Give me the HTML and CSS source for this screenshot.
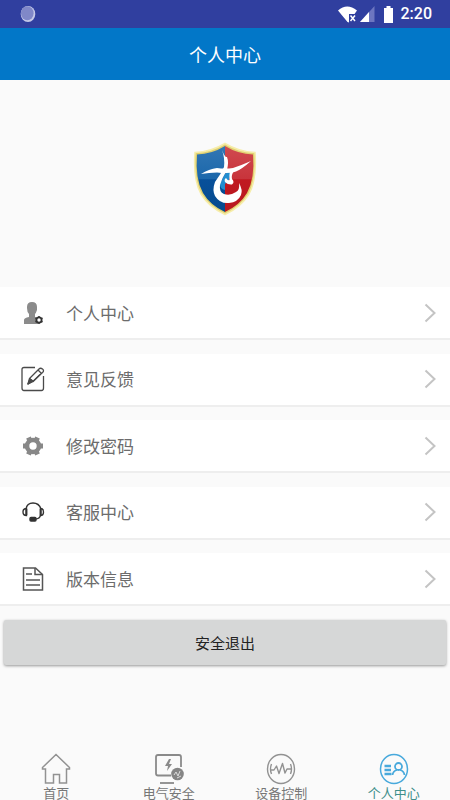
FILE: index.html
```html
<!DOCTYPE html>
<html lang="zh-CN">
<head>
<meta charset="utf-8">
<meta name="viewport" content="width=device-width, initial-scale=1">
<title>个人中心</title>
<link rel="stylesheet" href="styles.css">
</head>
<body>
<div class="status">
  <svg class="status-dot" width="16" height="18" viewBox="0 0 16 18" aria-hidden="true">
    <ellipse cx="8" cy="9" rx="7.300" ry="8" fill="#c4c9e8"/>
    <ellipse cx="7.300" cy="8.300" rx="6.300" ry="7" fill="#8088c8"/>
  </svg>
  <div class="status-right">
    <svg width="56" height="20" viewBox="0 0 56 20" aria-hidden="true">
      <path d="M0 6.500Q9-1.500 19 6.500L16.500 10H11v8.500L9.500 18Z" fill="#fff"/>
      <path d="M12.500 11.500l4.500 5.500M17 11.500l-4.500 5.500" stroke="#fff" stroke-width="1.500"/>
      <path d="M22 18L36.500 2v16Z" fill="#6d76c0"/>
      <path d="M22 18L31 8v10Z" fill="#fff"/>
      <path d="M46 4h2.500V2h4v2H55v15H46Z" fill="#fff"/>
    </svg>
    <span class="clock">2:20</span>
  </div>
</div>
<header class="header"><h1>个人中心</h1></header>
<main class="main">
  <div class="brand">
    <svg width="64" height="74" viewBox="0 0 64 74" role="img" aria-label="徽标">
      <defs>
        <linearGradient id="blue" x1="0" y1="0" x2="0" y2="1"><stop offset="0" stop-color="#3277b4"/><stop offset=".5" stop-color="#1b67ab"/><stop offset=".51" stop-color="#08509a"/><stop offset="1" stop-color="#064a8e"/></linearGradient>
        <linearGradient id="red" x1="0" y1="0" x2="0" y2="1"><stop offset="0" stop-color="#d04a50"/><stop offset=".5" stop-color="#c8343b"/><stop offset=".51" stop-color="#c01920"/><stop offset="1" stop-color="#b81820"/></linearGradient>
      </defs>
      <path d="M32 1.500Q46 10 62 10.500Q64 37 56 52Q48 65 32 72.500Q16 65 8 52Q0 37 2 10.500Q18 10 32 1.500Z" fill="#e0d070" stroke="#f6edaa" stroke-width="1.500"/>
      <path d="M32 4Q19 12 4 12.500Q2 37 10 51Q17 63 32 70Z" fill="url(#blue)"/>
      <path d="M32 4Q45 12 60 12.500Q62 37 54 51Q47 63 32 70Z" fill="url(#red)"/>
      <path d="M33 30H38L36 38L32 42V48Q27 47 27 42Z" fill="#248ed0"/>
      <path d="M8 32Q16 27 24 26Q32 27 40 26Q49 23 58 19Q49 27 43 29.500Q37 32 24 30.500Q16 30.500 8 32Z" fill="#fff"/>
      <path d="M29 8Q32 16 34 15Q36 20 34 28Q29 36 27 43Q26 50 31 52Q37 54 43 50Q47 48 46 41Q50 48 48 53Q45 60 36 61Q27 62 22 54Q19 48 22 40Q28 32 31 25Q32 16 29 8Z" fill="#fff"/>
      <path d="M37 29H41Q38 33 39 37Q42 40 39 42.500Q35 43 32 40Q31 37 33 36Q35 39 36.500 38Q36 33 37 29Z" fill="#fff"/>
    </svg>
  </div>
  <ul class="menu">
    <li><a class="row" href="#profile">
      <svg class="icon" width="24" height="26" viewBox="0 0 24 26" aria-hidden="true">
        <path d="M6 7Q6 2 11 2T16 7V10Q15 13 14 14V17L19 18L17 24H3V20Q3 18 8 17V14Q6 12 6 8Z" fill="#8b8b8b"/>
        <circle cx="18" cy="20" r="2.600" fill="#fff" stroke="#333" stroke-width="1.800"/>
        <path d="M18 16v1M18 23v1M14.500 18l1 .6M20.500 21.400l1 .6M14.500 22l1-.6M20.500 18.600l1-.6" stroke="#333" stroke-width="1.500"/>
      </svg>
      <span class="label">个人中心</span>
      <svg class="chevron" width="12" height="20" viewBox="0 0 12 20" aria-hidden="true"><path d="M1.500 1.500L10.500 10L1.500 18.500"/></svg>
    </a></li>
    <li><a class="row" href="#feedback">
      <svg class="icon" width="24" height="26" viewBox="0 0 24 26" aria-hidden="true" fill="none" stroke="#4a4a4a" stroke-width="1.300" stroke-linejoin="round">
        <path d="M14 1.500H3Q1 1.500 1 3.500V22Q1 24.500 3 24.500H20.500Q22.500 24.500 22.500 22V10"/>
        <path d="M7 18L8.500 12.500L18 3Q19.500 1.500 21.500 3T21.500 6.500L12 15.500Z"/>
        <path d="M17 4L20.500 7.500M8.500 12.500L12 15.500L19 8.500M7 18L9.500 13.500"/>
        <path d="M7 18L9 13L12 15Z" fill="#4a4a4a"/>
      </svg>
      <span class="label">意见反馈</span>
      <svg class="chevron" width="12" height="20" viewBox="0 0 12 20" aria-hidden="true"><path d="M1.500 1.500L10.500 10L1.500 18.500"/></svg>
    </a></li>
    <li><a class="row" href="#password">
      <svg class="icon" width="24" height="26" viewBox="0 0 24 26" aria-hidden="true">
        <circle cx="12" cy="13" r="6" fill="none" stroke="#888" stroke-width="4.600"/>
        <path d="M2 13H6M18 13H22M7.500 4.500L9 8M15 18L16.500 21.500M16.500 4.500L15 8M9 18L7.500 21.500" stroke="#888" stroke-width="5" stroke-linejoin="round"/>
      </svg>
      <span class="label">修改密码</span>
      <svg class="chevron" width="12" height="20" viewBox="0 0 12 20" aria-hidden="true"><path d="M1.500 1.500L10.500 10L1.500 18.500"/></svg>
    </a></li>
    <li><a class="row" href="#service">
      <svg class="icon" width="24" height="26" viewBox="0 0 24 26" aria-hidden="true" fill="none" stroke="#333" stroke-width="1.400">
        <path d="M5 10Q6 4 12 4T20 10"/>
        <path d="M5.500 9.500Q2 9.500 2 13T5.500 16.500ZM19.500 9.500Q22.500 9.500 22.500 13T19.500 16.500Z"/>
        <path d="M5.300 10V16M19.700 10V16" stroke-width="2"/>
        <path d="M19.500 16Q19 20 14 20"/>
        <rect x="9" y="18.500" width="6" height="3.500" rx="1" fill="#333"/>
      </svg>
      <span class="label">客服中心</span>
      <svg class="chevron" width="12" height="20" viewBox="0 0 12 20" aria-hidden="true"><path d="M1.500 1.500L10.500 10L1.500 18.500"/></svg>
    </a></li>
    <li><a class="row" href="#version">
      <svg class="icon" width="24" height="26" viewBox="0 0 24 26" aria-hidden="true" fill="none" stroke="#555" stroke-width="1.500">
        <path d="M2.500 2H14.500L21.500 8.500V24H2.500Z"/>
        <path d="M14 2V8.500H21.500M5 8H11M5 14H19M5 19H19"/>
      </svg>
      <span class="label">版本信息</span>
      <svg class="chevron" width="12" height="20" viewBox="0 0 12 20" aria-hidden="true"><path d="M1.500 1.500L10.500 10L1.500 18.500"/></svg>
    </a></li>
  </ul>
  <button class="logout" type="button">安全退出</button>
</main>
<nav class="tabs">
  <a class="tab" href="#home">
    <svg width="30" height="32" viewBox="0 0 30 32" aria-hidden="true" fill="none" stroke="#929292" stroke-width="1.500">
      <path d="M1.500 16V14.500L15 1.500L28.500 14.500V16H25.500V30H18.500V21.500H12.500V30H4.500V16Z"/>
    </svg>
    <span>首页</span>
  </a>
  <a class="tab" href="#electric">
    <svg width="30" height="32" viewBox="0 0 30 32" aria-hidden="true" fill="none" stroke="#8a8a8a" stroke-width="1.800">
      <path d="M17 22.500H4Q2 22.500 2 20.500V4Q2 2 4 2H25Q27 2 27 4V14"/>
      <path d="M6 30H20"/>
      <path d="M15 6L11 13H14L13 18L18 11H15L17 6Z" fill="#8a8a8a" stroke="none"/>
      <circle cx="23.500" cy="21" r="6.300" fill="#858585" stroke="none"/>
      <path d="M20 22L22 19L24 23L26 18M23 25L27 23" stroke="#ddd" stroke-width="1"/>
    </svg>
    <span>电气安全</span>
  </a>
  <a class="tab" href="#devices">
    <svg width="30" height="32" viewBox="0 0 30 32" aria-hidden="true" fill="none" stroke="#929292" stroke-width="1.400" stroke-linejoin="round">
      <ellipse cx="15" cy="16" rx="13.500" ry="14.500"/>
      <path d="M5.500 11Q3.500 16 5.500 21M24.500 11Q26.500 16 24.500 21M5 17H8L10.500 13L13 20.500L16.500 10.500L19 20L21 16H25"/>
    </svg>
    <span>设备控制</span>
  </a>
  <a class="tab active" href="#me" aria-current="page">
    <svg width="30" height="32" viewBox="0 0 30 32" aria-hidden="true" fill="none" stroke="#48a9dc" stroke-width="1.500">
      <ellipse cx="15" cy="16" rx="13.500" ry="14.500"/>
      <path d="M5.500 13H12M5.500 17H12M5.500 21H12.500" stroke-width="2.400"/>
      <circle cx="19.500" cy="13.500" r="3.500" stroke-width="1.800"/>
      <path d="M13.500 22Q14 18 18 17M21 17Q25 18 25.500 22" stroke-width="1.800"/>
    </svg>
    <span>个人中心</span>
  </a>
</nav>
</body>
</html>
```
FILE: styles.css
```css
* {
  box-sizing: border-box;
}

body {
  margin: 0;
  min-height: 100vh;
  display: flex;
  flex-direction: column;
  background: #fafafa;
  font-family: "Noto Sans CJK SC", sans-serif;
}

svg {
  display: block;
  flex: none;
}

a {
  color: inherit;
  text-decoration: none;
}

.status {
  display: flex;
  flex: none;
  align-items: center;
  justify-content: space-between;
  height: 28px;
  padding: 0 18px 0 20px;
  background: #303f9f;
  color: #fff;
}

.status-right {
  display: flex;
  align-items: center;
  gap: 7px;
}

.clock {
  font: 500 16px/20px Roboto, sans-serif;
}

.header {
  display: flex;
  flex: none;
  align-items: center;
  justify-content: center;
  height: 52px;
  background: #0277c8;
  color: #fff;
}

.header h1 {
  margin: 0;
  font-size: 18px;
  font-weight: 400;
  line-height: 24px;
}

.main {
  flex: 1;
}

.brand {
  display: flex;
  justify-content: center;
  padding: 62px 0 71px;
}

.menu {
  display: flex;
  flex-direction: column;
  justify-content: space-between;
  min-height: 319px;
  margin: 0;
  padding: 0;
  list-style: none;
}

.row {
  display: flex;
  align-items: center;
  height: 53px;
  padding: 0 14px 0 21px;
  border-bottom: 2px solid #eee;
  background: #fff;
  color: #6c6c6c;
}

.label {
  flex: 1;
  margin-left: 21px;
  font-size: 17px;
  line-height: 24px;
}

.chevron {
  fill: none;
  stroke: #c4c4c4;
  stroke-width: 2;
}

.logout {
  display: block;
  width: calc(100% - 8px);
  height: 45px;
  margin: 14px 4px 0;
  padding: 0;
  border: 0;
  border-radius: 2px;
  background: #d6d7d7;
  box-shadow: 0 1px 3px rgba(0, 0, 0, 0.4);
  color: #222;
  font-family: inherit;
  font-size: 15px;
  line-height: 20px;
}

.tabs {
  display: grid;
  grid-template-columns: repeat(4, 1fr);
  flex: none;
}

.tab {
  display: flex;
  flex-direction: column;
  align-items: center;
  color: #777;
  font-size: 13px;
  line-height: 15px;
}

.tab.active {
  color: #3f8f8a;
}
```
